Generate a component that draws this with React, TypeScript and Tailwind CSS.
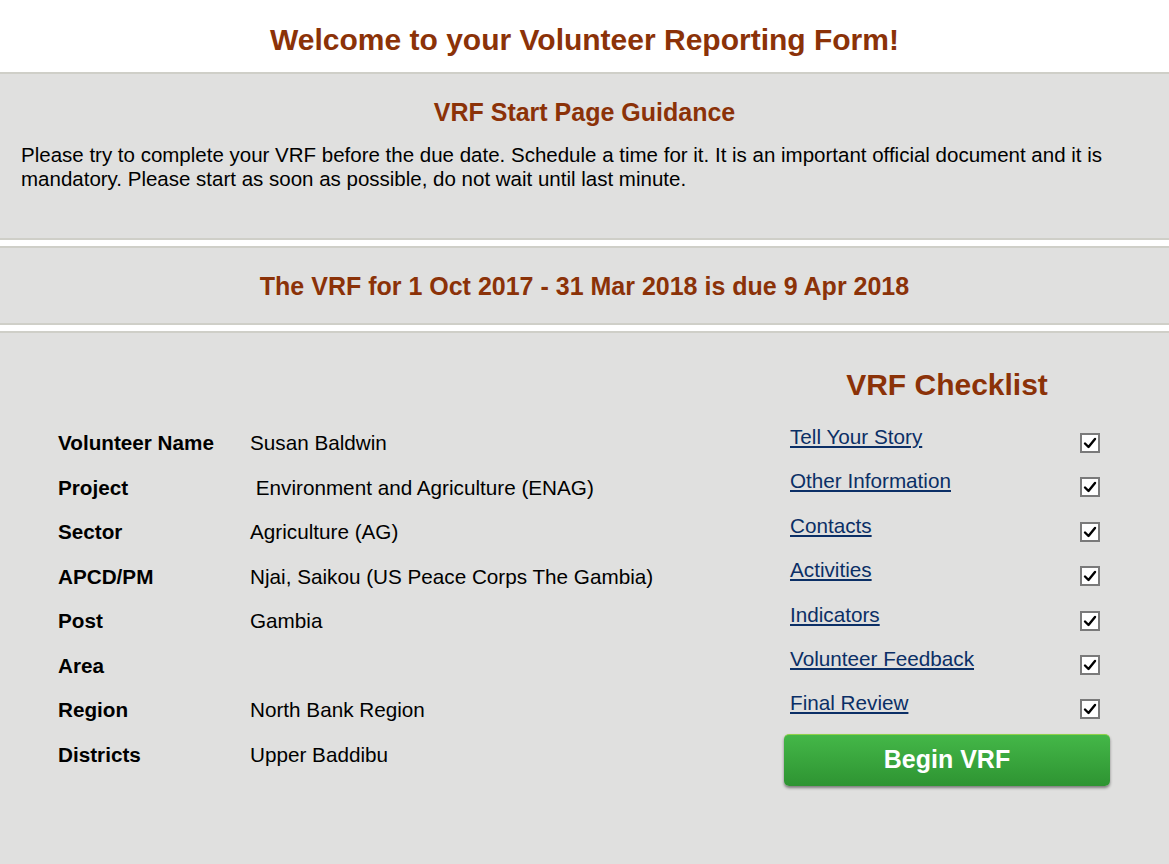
import React from "react";

const rows: [string, string][] = [
  ["Volunteer Name", "Susan Baldwin"],
  ["Project", "\u00a0Environment and Agriculture (ENAG)"],
  ["Sector", "Agriculture (AG)"],
  ["APCD/PM", "Njai, Saikou (US Peace Corps The Gambia)"],
  ["Post", "Gambia"],
  ["Area", ""],
  ["Region", "North Bank Region"],
  ["Districts", "Upper Baddibu"],
];

const checklist = [
  "Tell Your Story",
  "Other Information",
  "Contacts",
  "Activities",
  "Indicators",
  "Volunteer Feedback",
  "Final Review",
];

function Check() {
  return (
    <div className="w-[20px] h-[20px] border-2 border-[#7a7a7a] bg-white flex items-center justify-center">
      <svg width="14" height="14" viewBox="0 0 14 14">
        <path d="M2 7.5 L5.5 11 L12 3" fill="none" stroke="#000" strokeWidth="2.4" strokeLinecap="round" strokeLinejoin="round" />
      </svg>
    </div>
  );
}

export default function App() {
  return (
    <div className="w-[1169px] h-[864px] overflow-hidden bg-white font-['Liberation_Sans',Arial,sans-serif] flex flex-col">
      <h1 className="h-[72px] pt-[21px] text-center text-[30px] leading-[38px] font-bold text-[#8b3208]">
        Welcome to your Volunteer Reporting Form!
      </h1>
      <div className="h-[168px] bg-[#e0e0df] border-t-2 border-b-2 border-[#cfcfc8] pt-[22px] px-[21px]">
        <h2 className="text-center text-[25px] leading-[32px] font-bold text-[#8b3208]">VRF Start Page Guidance</h2>
        <p className="mt-[15px] text-[20.5px] leading-[24px] text-black">
          Please try to complete your VRF before the due date. Schedule a time for it. It is an important official document and it is mandatory. Please start as soon as possible, do not wait until last minute.
        </p>
      </div>
      <div className="h-[6px]" />
      <div className="h-[79px] bg-[#e0e0df] border-t-2 border-b-2 border-[#cfcfc8] flex items-center justify-center">
        <h2 className="text-center text-[25px] leading-[32px] font-bold text-[#8b3208]">
          The VRF for 1 Oct 2017 - 31 Mar 2018 is due 9 Apr 2018
        </h2>
      </div>
      <div className="h-[6px]" />
      <div className="flex-1 bg-[#e0e0df] border-t-2 border-[#cfcfc8] flex">
        <div className="w-[784px] pl-[58px] pt-[98px]">
          {rows.map(([k, v]) => (
            <div key={k} className="flex h-[44.5px] items-start text-[20.7px] leading-[24px]">
              <div className="w-[192px] font-bold text-black">{k}</div>
              <div className="text-black">{v}</div>
            </div>
          ))}
        </div>
        <div className="w-[326px] pt-[33px] flex flex-col">
          <h2 className="text-center text-[30px] leading-[38px] font-bold text-[#8b3208]">VRF Checklist</h2>
          <div className="mt-[21px] flex flex-col">
            {checklist.map((c) => (
              <div key={c} className="h-[44.4px] flex items-start pl-[6px]">
                <a href="#" className="flex-1 text-[20.7px] leading-[24px] text-[#0b2f66] underline decoration-2 underline-offset-2">{c}</a>
                <div className="mr-[10px] mt-[8px]">
                  <Check />
                </div>
              </div>
            ))}
          </div>
          <button className="mt-[-2px] h-[52px] rounded-[5px] bg-gradient-to-b from-[#44b748] to-[#2e9432] border-t border-[#8fd14a] text-white text-[25px] font-bold shadow-[0_2px_3px_rgba(0,0,0,0.45)]">
            Begin VRF
          </button>
        </div>
      </div>
    </div>
  );
}
